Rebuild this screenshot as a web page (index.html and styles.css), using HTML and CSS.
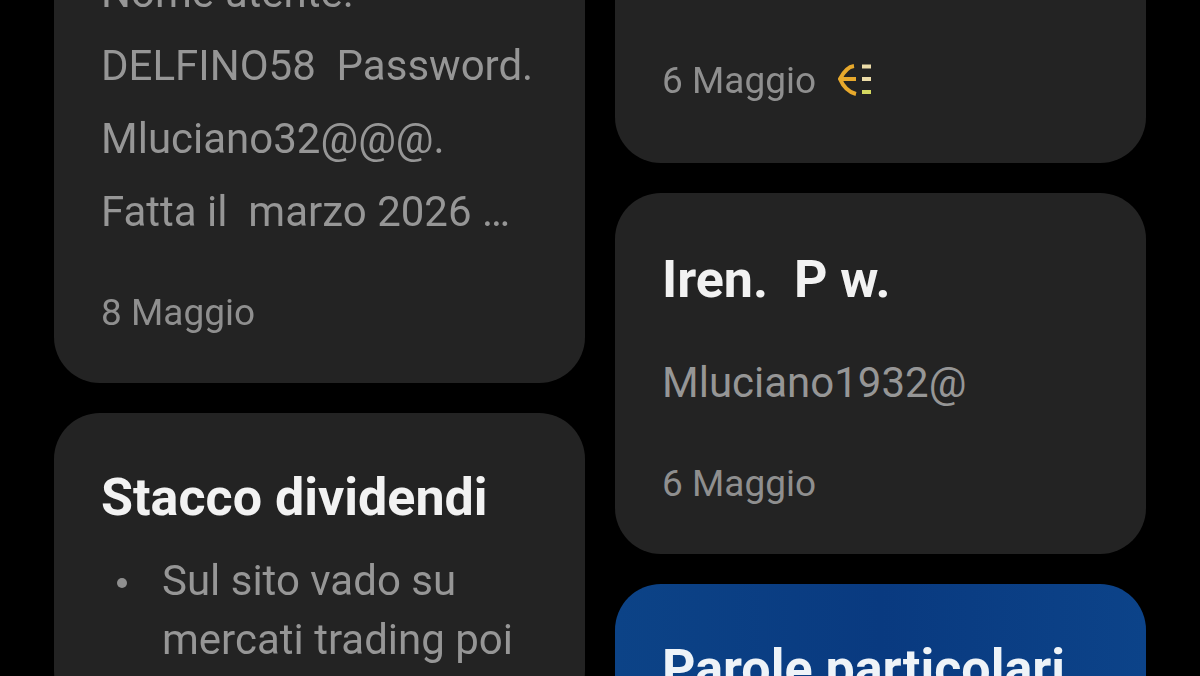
FILE: index.html
```html
<!DOCTYPE html>
<html lang="it">
<head>
  <meta charset="UTF-8" />
  <title>Note</title>
  <link rel="stylesheet" href="styles.css">
</head>
<body>
  <div class="board">
    <!-- colonna sinistra -->
    <div class="col col-left">
      <div class="card">
        <p class="line">Nome utente.</p>
        <p class="line">DELFINO58  Password.</p>
        <p class="line">Mluciano32@@@.</p>
        <p class="line">Fatta il  marzo 2026 …</p>
        <div class="date">8 Maggio</div>
      </div>
      <div class="card">
        <h2>Stacco dividendi</h2>
        <ul>
          <li>Sul sito vado su mercati trading poi</li>
        </ul>
      </div>
    </div>

    <!-- colonna destra -->
    <div class="col col-right">
      <div class="card card-first">
        <div class="date date-row">
          <span>6 Maggio</span>
          <svg class="euro" viewBox="0 0 34 34" width="34" height="34" fill="none" stroke="#e8a92c" stroke-width="4">
            <path d="M16 2 C9 3 5 9 2 15 C5 22 10 28 18 30"/>
            <path d="M2 15 H18"/>
            <path d="M24 2.5 H33" stroke="#ecdca8"/>
            <path d="M24 15 H33" stroke="#ecdca8"/>
            <path d="M24 28 H33" stroke="#d4d860"/>
          </svg>
        </div>
      </div>
      <div class="card card-iren">
        <h2>Iren.  P w.</h2>
        <p class="line">Mluciano1932@</p>
        <div class="date">6 Maggio</div>
      </div>
      <div class="card card-blue">
        <h2>Parole particolari</h2>
      </div>
    </div>
  </div>
</body>
</html>
```

FILE: styles.css
```css
html, body {
  margin: 0;
  height: 100%;
  overflow: hidden;
  background: #000;
}
body {
  font-family: Roboto, "Liberation Sans", sans-serif;
  color: #969696;
}
.board {
  display: grid;
  grid-template-columns: 531px 531px;
  gap: 30px;
  padding: 0 54px;
  align-items: start;
  filter: blur(0.5px);
}
.col {
  display: flex;
  flex-direction: column;
  gap: 30px;
}
/* la pagina e' scrollata, le prime card escono sopra */
.col-left {
  margin-top: -92px;
}
.col-right {
  margin-top: -60px;
}

.card {
  background: #232323;
  border-radius: 46px;
  padding: 55px 48px 48px 47px;
}
.card-first {
  height: 223px;
  box-sizing: border-box;
  padding-top: 119px;
}
.card-iren {
  padding-top: 57px;
}
.card-blue {
  background: linear-gradient(90deg, #0c4387 0%, #093a80 50%, #0c4389 100%);
  height: 300px;
}
.card-blue h2 {
  color: #eef3f8;
}
.col-left .card:first-child {
  padding-top: 48px;
}

h2 {
  margin: 0;
  font-size: 52px;
  line-height: 60px;
  font-weight: 700;
  color: #f2f2f2;
  white-space: pre-wrap;
}
.line {
  margin: 0;
  font-size: 42px;
  line-height: 73px;
  white-space: pre-wrap;
}
h2 + .line {
  margin-top: 36px;
}
.date {
  font-size: 37px;
  line-height: 44px;
  color: #8f8f8f;
  margin-top: 43px;
}
.date-row {
  display: flex;
  align-items: center;
  gap: 22px;
  margin-top: 0;
}

ul {
  list-style: none;
  margin: 23px 0 0;
  padding: 0;
  font-size: 42px;
  line-height: 59px;
}
li {
  display: flex;
}
li::before {
  content: "";
  flex: none;
  width: 10px;
  height: 10px;
  margin: 27px 35px 0 16px;
  border-radius: 50%;
  background: #8f8f8f;
}
```
